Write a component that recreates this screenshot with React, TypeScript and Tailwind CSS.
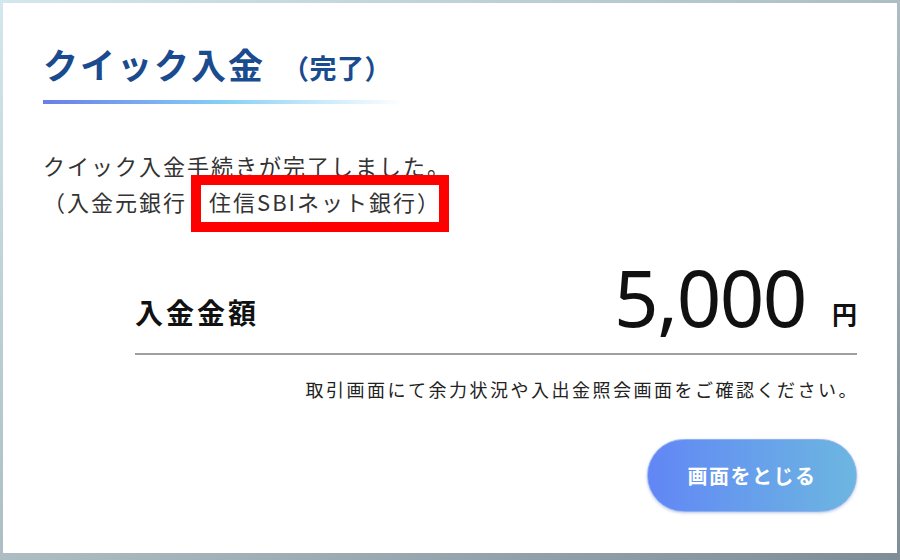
import React from 'react';

const jp = { fontFamily: '"Noto Sans CJK JP", "Noto Sans", sans-serif' };

export default function App() {
  return (
    <div
      className="w-[900px] h-[560px] bg-gradient-to-br from-[#d4e6ee] via-[#aebdc4] to-[#7f8e96] pl-[3px] pt-[3px] pr-[3px] pb-[7px]"
      style={jp}
    >
      <div className="h-full bg-white px-10 pt-[41px] flex flex-col">
        {/* title */}
        <h1 className="flex items-baseline leading-[40px] h-[40px] text-[#1a4b8e] font-bold">
          <span className="text-[35px] tracking-[2px]">クイック入金</span>
          <span className="text-[27px] ml-[17px] tracking-[0.5px]">（完了）</span>
        </h1>
        <div className="mt-4 h-1 w-[362px] bg-gradient-to-r from-[#6a7ee8] via-[#86d0f5] to-white" />

        {/* message */}
        <p className="mt-[43px] text-[22px] leading-[36px] tracking-[2px] text-[#333]">
          クイック入金手続きが完了しました。
          <br />
          （入金元銀行
          <span className="relative inline-block ml-[22px]">
            住信SBIネット銀行）
            <span className="absolute -left-[18px] -top-[8px] -right-[8px] -bottom-[13px] border-[10px] border-[#ff0000]" />
          </span>
        </p>

        {/* amount */}
        <div className="ml-[92px] mt-[39px] flex flex-col">
          <div className="flex items-end">
            <span className="mb-[10px] text-[28px] leading-none font-bold tracking-[3px] text-[#111]">入金金額</span>
            <span
              className="ml-auto text-[78px] leading-none tracking-[-1.5px] text-[#111]"
              style={{ fontFamily: '"Noto Sans", sans-serif' }}
            >
              5,000
            </span>
            <span className="ml-[26px] mb-[10px] text-[25px] leading-none font-bold text-[#111]">円</span>
          </div>
          <div className="mt-[17px] border-t-2 border-[#a0a0a0]" />
          <p className="mt-[22px] text-right text-[18px] leading-[24px] tracking-[2.5px] text-[#222] -mr-[2px]">
            取引画面にて余力状況や入出金照会画面をご確認ください。
          </p>
          <div className="mt-[38px] flex justify-end">
            <button className="w-[210px] h-[73px] rounded-full bg-gradient-to-r from-[#6286f5] to-[#6db6e0] text-white text-[20px] font-bold tracking-[1.5px] shadow-[0_1px_3px_rgba(60,90,180,0.35)] border border-[#8fb0f5]">
              画面をとじる
            </button>
          </div>
        </div>
      </div>
    </div>
  );
}
